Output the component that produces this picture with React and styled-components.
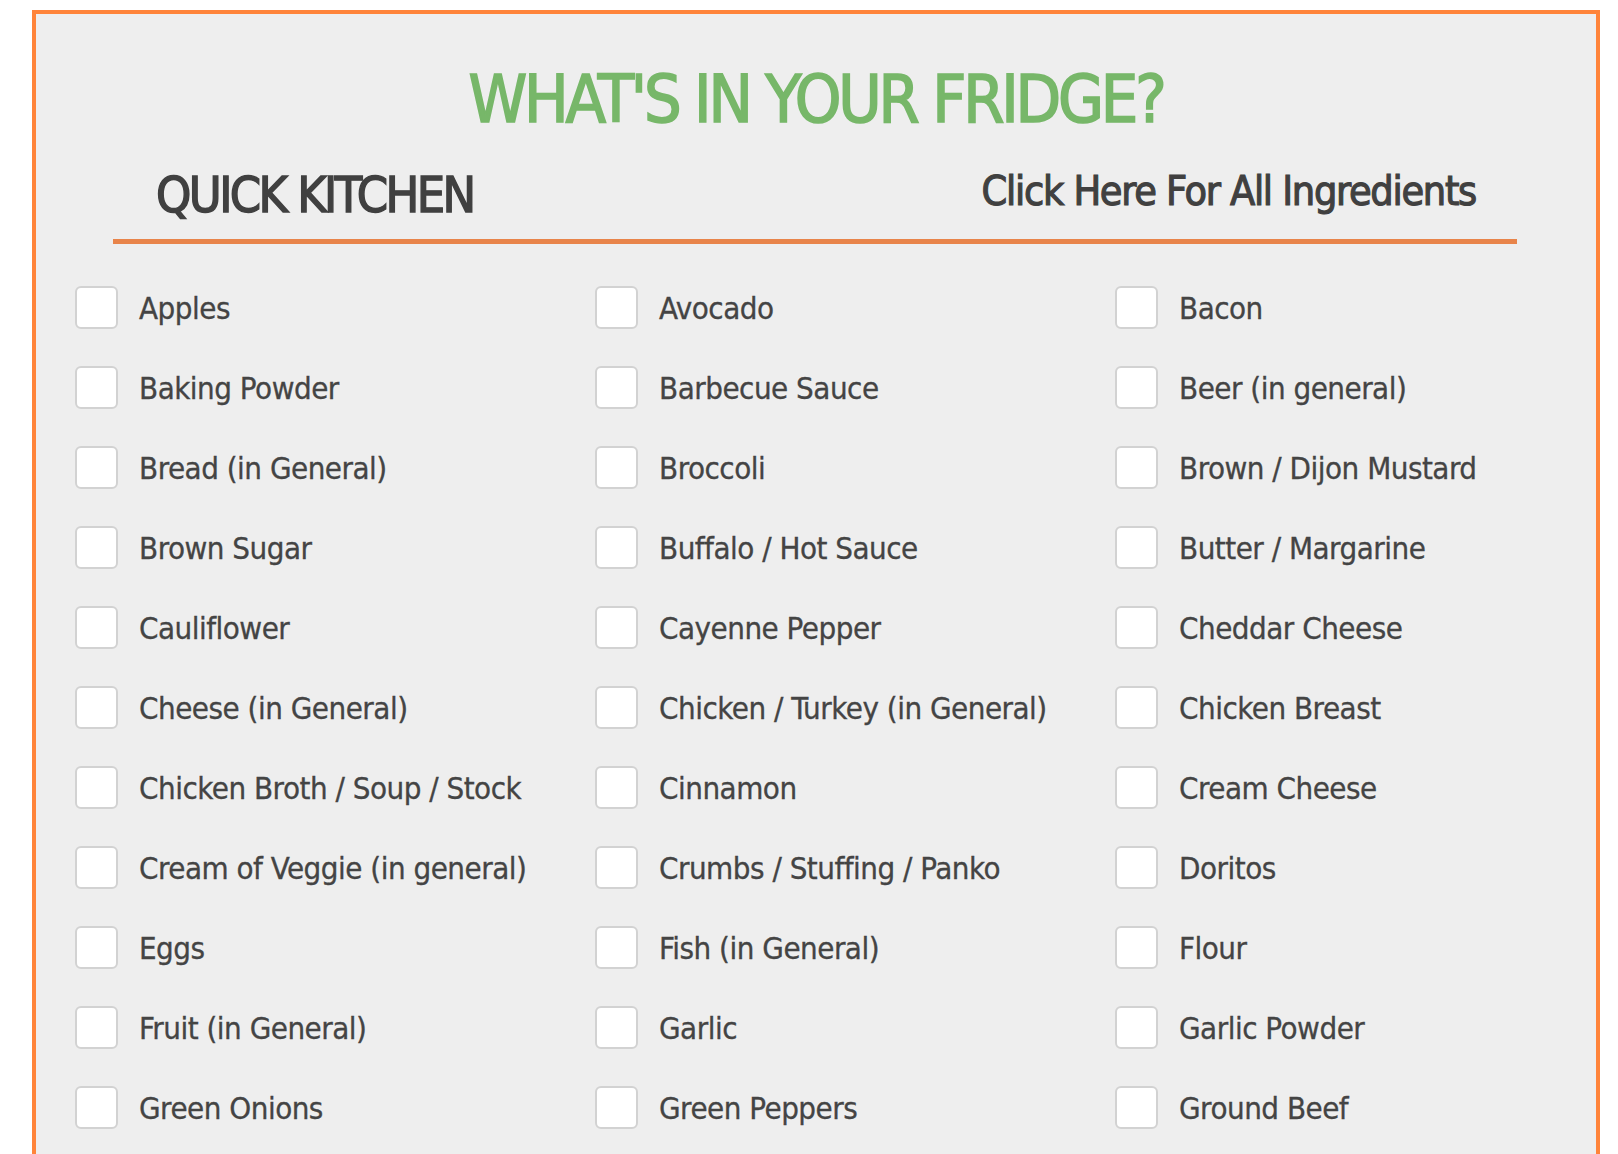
import styled, { createGlobalStyle } from 'styled-components';

const ingredients = [
    'Apples', 'Avocado', 'Bacon',
    'Baking Powder', 'Barbecue Sauce', 'Beer (in general)',
    'Bread (in General)', 'Broccoli', 'Brown / Dijon Mustard',
    'Brown Sugar', 'Buffalo / Hot Sauce', 'Butter / Margarine',
    'Cauliflower', 'Cayenne Pepper', 'Cheddar Cheese',
    'Cheese (in General)', 'Chicken / Turkey (in General)', 'Chicken Breast',
    'Chicken Broth / Soup / Stock', 'Cinnamon', 'Cream Cheese',
    'Cream of Veggie (in general)', 'Crumbs / Stuffing / Panko', 'Doritos',
    'Eggs', 'Fish (in General)', 'Flour',
    'Fruit (in General)', 'Garlic', 'Garlic Powder',
    'Green Onions', 'Green Peppers', 'Ground Beef',
]

export default function App() {
    return (
        <>
            <GlobalStyle/>
            <FridgeBox>
                <Title>WHAT'S IN YOUR FRIDGE?</Title>
                <HeaderRow>
                    <KitchenName>QUICK KITCHEN</KitchenName>
                    <AllLink href="#">Click Here For All Ingredients</AllLink>
                </HeaderRow>
                <Grid>
                    {ingredients.map(name=>
                        <Item key={name}>
                            <Box type="checkbox"/>
                            <Label>{name}</Label>
                        </Item>)}
                </Grid>
            </FridgeBox>
        </>
    )
}

const GlobalStyle = createGlobalStyle`
body {
margin: 0;
background: #ffffff;
font-family: "DejaVu Sans Condensed", "DejaVu Sans", sans-serif;
overflow: hidden;
}
`
const FridgeBox = styled.div`
margin: 10px 18px 0 32px;
border: 4px solid #ff843a;
border-bottom: none;
background-color: #eeeeee;
padding: 53px 0 80px 0;
`
const Title = styled.h1`
margin: 0;
text-align: center;
font-size: 66px;
line-height: 66px;
font-weight: 400;
letter-spacing: -3.2px;
color: #77b769;
-webkit-text-stroke: 1.6px #77b769;
`
const HeaderRow = styled.div`
margin: 37px 79px 0 77px;
padding: 0 41px 19px 43px;
border-bottom: 5px solid #e8844a;
display: flex;
justify-content: space-between;
align-items: flex-end;
color: #404040;
`
const KitchenName = styled.div`
font-size: 50px;
line-height: 50px;
font-weight: 400;
letter-spacing: -2.6px;
-webkit-text-stroke: 1.4px #404040;
`
const AllLink = styled.a`
margin-bottom: 8px;
font-size: 41px;
line-height: 41px;
font-weight: 400;
letter-spacing: -1.3px;
color: #404040;
-webkit-text-stroke: 1.1px #404040;
text-decoration: none;
`
const Grid = styled.div`
margin-top: 42px;
padding-left: 39px;
display: grid;
grid-template-columns: repeat(3, 480px);
column-gap: 40px;
row-gap: 37px;
`
const Item = styled.label`
display: flex;
align-items: center;
height: 43px;
gap: 21px;
`
const Box = styled.input`
appearance: none;
flex-shrink: 0;
margin: 0;
width: 43px;
height: 43px;
box-sizing: border-box;
border: 2px solid #d2d2d2;
border-radius: 6px;
background-color: #ffffff;
`
const Label = styled.span`
padding-top: 2px;
font-size: 31px;
line-height: 41px;
letter-spacing: -0.5px;
color: #444444;
white-space: nowrap;
-webkit-text-stroke: 0.3px #444444;
`
